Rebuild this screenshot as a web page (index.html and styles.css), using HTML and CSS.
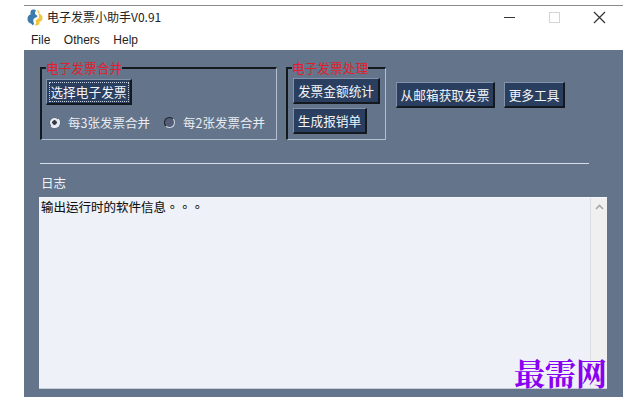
FILE: index.html
```html
<!DOCTYPE html>
<html lang="zh-CN">
<head>
  <meta charset="UTF-8" />
  <meta name="viewport" content="width=device-width, initial-scale=1.0" />
  <title>电子发票小助手V0.91</title>
  <link rel="stylesheet" href="styles.css">
</head>
<body>
  <div class="window">
    <div class="titlebar">
      <svg class="app-icon" width="17" height="17" viewBox="0 0 17 17">
        <path d="M7 0.5 C4 0.5 3.5 2 3.5 4 L3.5 5.5 C1.5 6 0.5 7.5 0.5 10 C0.5 12.5 2 14 4 14.5 L6 16.5 L7 14.5 C6 12.5 6 10.5 7 9.5 C8 8.5 10 8.5 10.5 7 L8 5 L8 3 C9.5 2 9 0.5 7 0.5 Z" fill="#3b7bad" />
        <path d="M10 1 C11.5 1 12.5 2 12.5 3.5 L12.5 5 C14.5 5.5 16 7 15.5 9.5 C15 12 14 12.5 12.5 12.5 L12.5 14 C12.5 15.5 11 16.5 9 16.5 L7.5 16 C9.5 15.5 9.5 13 8.5 12 C9.5 10 12 10 12 7.5 C12 5 11 3 10 1 Z" fill="#f0c63e" />
      </svg>
      <span class="app-title">电子发票小助手V0.91</span>
      <div class="win-controls">
        <span class="win-min"></span>
        <span class="win-max"></span>
        <svg class="win-close" width="13" height="13" viewBox="0 0 13 13">
          <path d="M1 1 L12 12 M12 1 L1 12" stroke="#333" stroke-width="1.2" fill="none" />
        </svg>
      </div>
    </div>

    <div class="menubar">
      <span>File</span>
      <span>Others</span>
      <span>Help</span>
    </div>

    <div class="content">
      <div class="toolbar">
        <fieldset class="group group-merge">
          <legend>电子发票合并</legend>
          <button class="btn btn-focus">选择电子发票</button>
          <div class="radios">
            <label class="radio"><span class="dot dot-on"></span>每3张发票合并</label>
            <label class="radio"><span class="dot"></span>每2张发票合并</label>
          </div>
        </fieldset>

        <fieldset class="group group-process">
          <legend>电子发票处理</legend>
          <button class="btn btn-stat">发票金额统计</button>
          <button class="btn btn-report">生成报销单</button>
        </fieldset>

        <button class="btn btn-mail">从邮箱获取发票</button>
        <button class="btn btn-more">更多工具</button>
      </div>

      <div class="divider"></div>
      <div class="log-label">日志</div>

      <div class="log">
        <div class="log-text" lang="zh-TW">输出运行时的软件信息。。。</div>
        <div class="scrollbar">
          <svg class="scroll-up" width="9" height="6" viewBox="0 0 9 6">
            <path d="M1 5 L4.5 1.5 L8 5" stroke="#a8a8a8" stroke-width="1.6" fill="none" />
          </svg>
          <svg class="scroll-down" width="9" height="6" viewBox="0 0 9 6">
            <path d="M1 1 L4.5 4.5 L8 1" stroke="#a8a8a8" stroke-width="1.6" fill="none" />
          </svg>
        </div>
      </div>
    </div>
  </div>

  <div class="watermark">最需网</div>
</body>
</html>
```

FILE: styles.css
```css
html, body {
  margin: 0;
  padding: 0;
}
body {
  width: 627px;
  height: 403px;
  overflow: hidden;
  background-color: #ffffff;
  font-family: "Noto Sans CJK SC", "Liberation Sans", sans-serif;
  position: relative;
}
.window {
  margin: 5px 4px 0 24px;
  height: 392px;
  border-top: 1px solid #8a8a8a;
  display: flex;
  flex-direction: column;
  box-sizing: border-box;
}
.titlebar {
  height: 26px;
  display: flex;
  align-items: center;
  padding: 0 0 3px 3px;
  box-sizing: border-box;
  background-color: #ffffff;
}
.app-icon {
  margin-right: 3px;
}
.app-title {
  font-size: 12px;
  line-height: 14px;
  margin-bottom: 1px;
  color: #222222;
}
.win-controls {
  margin-left: auto;
  display: flex;
  align-items: center;
}
.win-min {
  width: 11px;
  height: 1px;
  background-color: #333333;
  margin-right: 34px;
}
.win-max {
  width: 9px;
  height: 9px;
  border: 1px solid #d4d4d4;
  margin-right: 33px;
}
.win-close {
  margin-right: 17px;
}
.menubar {
  height: 18px;
  display: flex;
  align-items: center;
  gap: 13.5px;
  padding-left: 7px;
  padding-bottom: 2px;
  box-sizing: border-box;
  font-family: "Liberation Sans", sans-serif;
  font-size: 12px;
  color: #222222;
  background-color: #ffffff;
}
.content {
  flex: 1;
  background-color: #64748a;
  padding: 12px 15px 8px 15px;
  display: flex;
  flex-direction: column;
  min-height: 0;
}
.toolbar {
  display: flex;
  align-items: flex-start;
  height: 78px;
}
.group {
  margin: 0;
  padding: 0;
  height: 78px;
  box-sizing: border-box;
  border-style: solid;
  border-width: 2px 1px 1px 2px;
  border-color: #14181f #b4c0d0 #b4c0d0 #14181f;
  min-width: 0;
}
.group legend {
  padding: 0;
  margin-left: 4px;
  font-size: 12.7px;
  line-height: 12px;
  color: #e01f2c;
}
.group-merge {
  width: 237px;
  margin-left: 1px;
  margin-right: 9px;
}
.group-process {
  width: 100px;
  margin-right: 10px;
}
.btn {
  display: block;
  padding: 0;
  height: 26px;
  box-sizing: border-box;
  font-family: inherit;
  font-size: 12.7px;
  color: #f2f5f9;
  background-color: #2a3f5f;
  border-style: solid;
  border-width: 1px 2px 2px 1px;
  border-color: #8392a8 #14181f #14181f #8392a8;
}
.btn-focus {
  width: 86px;
  margin: 5px 0 0 4px;
  outline: 1px dotted #c8d0dc;
  outline-offset: -4px;
}
.radios {
  display: flex;
  gap: 14px;
  margin: 9px 0 0 7px;
}
.radio {
  display: flex;
  align-items: center;
  gap: 8px;
  font-size: 12.5px;
  line-height: 17px;
  color: #e8ecf2;
}
.dot {
  width: 11px;
  height: 11px;
  border-radius: 50%;
  box-sizing: border-box;
  border: 1px solid;
  border-color: #1c222c #d0d6e0 #d0d6e0 #1c222c;
  background-color: #545c78;
  flex: none;
}
.dot-on {
  background-color: #e6e9ef;
  border-color: #59637a #eef1f5 #eef1f5 #59637a;
  background-image: radial-gradient(circle, #333a46 2px, transparent 2.5px);
}
.btn-stat {
  width: 87px;
  margin-left: 5px;
  margin-top: 4px;
}
.btn-report {
  width: 74px;
  margin-left: 5px;
  margin-top: 4px;
}
.btn-mail {
  width: 99px;
  margin-top: 20px;
  margin-right: 9px;
}
.btn-more {
  width: 61px;
  margin-top: 20px;
}
.divider {
  height: 1px;
  width: 549px;
  margin: 23px 0 0 1px;
  background-color: #d6dde8;
}
.log-label {
  margin: 11px 0 6px 2px;
  font-size: 12.5px;
  line-height: 16px;
  color: #f0f3f7;
}
.log {
  flex: 1;
  display: flex;
  min-height: 0;
  width: 568px;
  background-color: #eef1f7;
  border-top: 1px solid #f7f8fb;
  border-bottom: 1px solid #c6ccd8;
  box-sizing: border-box;
}
.log-text {
  flex: 1;
  padding: 0 2px;
  font-family: "Noto Sans CJK TC", "Noto Sans CJK SC", sans-serif;
  font-size: 12.5px;
  line-height: 17px;
  color: #111111;
  -webkit-text-stroke: 0.1px #111111;
}
.scrollbar {
  width: 17px;
  background-color: #f0f0f0;
  border-left: 1px solid #dcdee3;
  box-sizing: border-box;
  display: flex;
  flex-direction: column;
  justify-content: space-between;
  align-items: center;
  padding: 6px 0;
}
.watermark {
  position: absolute;
  left: 514px;
  top: 354px;
  font-family: "Noto Serif CJK SC", "Noto Sans CJK SC", serif;
  font-size: 31px;
  line-height: 36px;
  font-weight: 700;
  color: #8a00f0;
}
```
